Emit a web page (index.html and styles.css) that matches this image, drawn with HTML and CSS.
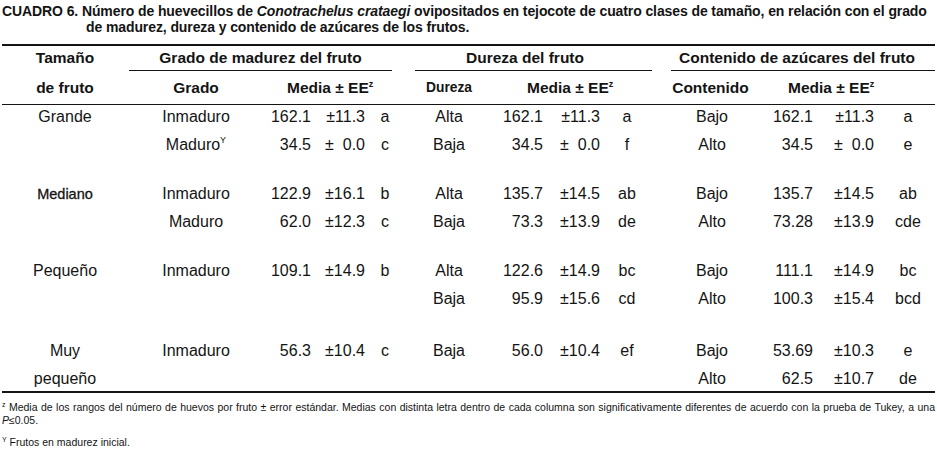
FILE: index.html
```html
<!DOCTYPE html>
<html lang="es">
<head>
<meta charset="utf-8">
<title>Cuadro 6</title>
<link rel="stylesheet" href="styles.css">
</head>
<body>
<div class="page">
  <p class="title">CUADRO 6. Número de huevecillos de <i>Conotrachelus crataegi</i> ovipositados en tejocote de cuatro clases de tamaño, en relación con el grado de madurez, dureza y contenido de azúcares de los frutos.</p>

  <div class="tbl">
    <div class="hd r1 k1">Tamaño</div>
    <div class="hd r1 grp ga">Grado de madurez del fruto</div>
    <div class="hd r1 grp gb">Dureza del fruto</div>
    <div class="hd r1 grp gc">Contenido de azúcares del fruto</div>

    <div class="hd r2 k1">de fruto</div>
    <div class="hd r2 k2">Grado</div>
    <div class="hd r2 ma">Media ± EE<sup class="sz">z</sup></div>
    <div class="hd r2 k6 small">Dureza</div>
    <div class="hd r2 mb">Media ± EE<sup class="sz">z</sup></div>
    <div class="hd r2 k10 cont">Contenido</div>
    <div class="hd r2 mc">Media ± EE<sup class="sz">z</sup></div>
    <div class="rule"></div>

    <div class="c k1">Grande</div>
    <div class="c k2">Inmaduro</div>
    <div class="c n k3">162.1</div>
    <div class="c n k4">±11.3</div>
    <div class="c l k5">a</div>
    <div class="c k6">Alta</div>
    <div class="c n k7">162.1</div>
    <div class="c n k8">±11.3</div>
    <div class="c l k9">a</div>
    <div class="c k10">Bajo</div>
    <div class="c n k11">162.1</div>
    <div class="c n k12">±11.3</div>
    <div class="c l k13">a</div>

    <div class="c k2">Maduro<sup class="sy">Y</sup></div>
    <div class="c n k3">34.5</div>
    <div class="c n k4">±&#8199;0.0</div>
    <div class="c l k5">c</div>
    <div class="c k6">Baja</div>
    <div class="c n k7">34.5</div>
    <div class="c n k8">±&#8199;0.0</div>
    <div class="c l k9">f</div>
    <div class="c k10">Alto</div>
    <div class="c n k11">34.5</div>
    <div class="c n k12">±&#8199;0.0</div>
    <div class="c l k13">e</div>

    <div class="gap g21"></div>

    <div class="c k1 med">Mediano</div>
    <div class="c k2">Inmaduro</div>
    <div class="c n k3">122.9</div>
    <div class="c n k4">±16.1</div>
    <div class="c l k5">b</div>
    <div class="c k6">Alta</div>
    <div class="c n k7">135.7</div>
    <div class="c n k8">±14.5</div>
    <div class="c l k9">ab</div>
    <div class="c k10">Bajo</div>
    <div class="c n k11">135.7</div>
    <div class="c n k12">±14.5</div>
    <div class="c l k13">ab</div>

    <div class="c k2">Maduro</div>
    <div class="c n k3">62.0</div>
    <div class="c n k4">±12.3</div>
    <div class="c l k5">c</div>
    <div class="c k6">Baja</div>
    <div class="c n k7">73.3</div>
    <div class="c n k8">±13.9</div>
    <div class="c l k9">de</div>
    <div class="c k10">Alto</div>
    <div class="c n k11">73.28</div>
    <div class="c n k12">±13.9</div>
    <div class="c l k13">cde</div>

    <div class="gap g21"></div>

    <div class="c k1">Pequeño</div>
    <div class="c k2">Inmaduro</div>
    <div class="c n k3">109.1</div>
    <div class="c n k4">±14.9</div>
    <div class="c l k5">b</div>
    <div class="c k6">Alta</div>
    <div class="c n k7">122.6</div>
    <div class="c n k8">±14.9</div>
    <div class="c l k9">bc</div>
    <div class="c k10">Bajo</div>
    <div class="c n k11">111.1</div>
    <div class="c n k12">±14.9</div>
    <div class="c l k13">bc</div>

    <div class="c k6">Baja</div>
    <div class="c n k7">95.9</div>
    <div class="c n k8">±15.6</div>
    <div class="c l k9">cd</div>
    <div class="c k10">Alto</div>
    <div class="c n k11">100.3</div>
    <div class="c n k12">±15.4</div>
    <div class="c l k13">bcd</div>

    <div class="gap g24"></div>

    <div class="c k1">Muy</div>
    <div class="c k2">Inmaduro</div>
    <div class="c n k3">56.3</div>
    <div class="c n k4">±10.4</div>
    <div class="c l k5">c</div>
    <div class="c k6">Baja</div>
    <div class="c n k7">56.0</div>
    <div class="c n k8">±10.4</div>
    <div class="c l k9">ef</div>
    <div class="c k10">Bajo</div>
    <div class="c n k11">53.69</div>
    <div class="c n k12">±10.3</div>
    <div class="c l k13">e</div>

    <div class="c last k1">pequeño</div>
    <div class="c last k10">Alto</div>
    <div class="c last n k11">62.5</div>
    <div class="c last n k12">±10.7</div>
    <div class="c last l k13">de</div>
  </div>

  <p class="note note1"><sup class="fz">z</sup> Media de los rangos del número de huevos por fruto ± error estándar. Medias con distinta letra dentro de cada columna son significativamente diferentes de acuerdo con la prueba de Tukey, a una <i>P</i>≤0.05.</p>
  <p class="note note2"><sup class="fz">Y</sup> Frutos en madurez inicial.</p>
</div>
</body>
</html>
```

FILE: styles.css
```css
html, body {
  margin: 0;
  padding: 0;
  background: #ffffff;
}

body {
  width: 937px;
  height: 451px;
  overflow: hidden;
  font-family: "Liberation Sans", Arial, sans-serif;
  color: #141414;
}

.page {
  padding: 3px 2px 0 2px;
}

.title {
  margin: 0 0 9px 0;
  font-size: 14px;
  line-height: 16px;
  font-weight: bold;
  letter-spacing: -0.1px;
  padding-left: 84px;
  text-indent: -84px;
}

.tbl {
  display: grid;
  grid-template-columns: 126px 136px 47px 54px 40px 88px 50px 57px 54px 116px 43px 61px 61px;
  border-top: 2px solid #141414;
  border-bottom: 2px solid #141414;
}

.k1 { grid-column: 1; }
.k2 { grid-column: 2; }
.k3 { grid-column: 3; }
.k4 { grid-column: 4; }
.k5 { grid-column: 5; }
.k6 { grid-column: 6; }
.k7 { grid-column: 7; }
.k8 { grid-column: 8; }
.k9 { grid-column: 9; }
.k10 { grid-column: 10; }
.k11 { grid-column: 11; }
.k12 { grid-column: 12; }
.k13 { grid-column: 13; }

.hd {
  font-weight: bold;
  font-size: 15.5px;
  text-align: center;
  white-space: nowrap;
}

.r1 {
  height: 24px;
  line-height: 24px;
}

.r1.k1 {
  height: 25px;
}

.grp {
  border-bottom: 1px solid #141414;
}

.ga {
  grid-column: 2 / 6;
  margin: 0 13px 0 1px;
}

.gb {
  grid-column: 6 / 10;
  margin: 0 2px 0 10px;
  padding-right: 17px;
}

.gc {
  grid-column: 10 / 14;
  margin-left: 17px;
  padding-right: 12px;
}

.r2 {
  height: 33px;
  line-height: 33px;
}

.small {
  font-size: 13.8px;
}

.cont {
  padding-right: 3px;
}

.ma {
  grid-column: 3 / 6;
  text-align: left;
  padding-left: 23px;
}

.mb {
  grid-column: 7 / 10;
  text-align: left;
  padding-left: 34px;
}

.mc {
  grid-column: 11 / 14;
  text-align: left;
  padding-left: 18px;
}

.sz {
  font-size: 9px;
  line-height: 0;
  vertical-align: 6px;
}

.rule {
  grid-column: 1 / -1;
  height: 1px;
  background: #141414;
}

.c {
  font-size: 16px;
  height: 24px;
  line-height: 24px;
  padding-bottom: 4px;
  text-align: center;
  white-space: nowrap;
}

.c.last {
  padding-bottom: 0;
}

.n {
  text-align: right;
}

.l {
  display: flex;
  justify-content: center;
}

.k13.l {
  padding-left: 7px;
}

.med {
  font-size: 14.5px;
  -webkit-text-stroke: 0.3px #141414;
}

.sy {
  font-size: 9px;
  line-height: 0;
  vertical-align: 7px;
}

.gap {
  grid-column: 1 / -1;
}

.g21 { height: 21px; }
.g24 { height: 24px; }

.note {
  margin: 0;
  font-size: 10.5px;
  line-height: 13px;
  text-align: justify;
}

.note1 {
  margin-top: 8px;
}

.note2 {
  margin-top: 9px;
}

.fz {
  font-size: 7px;
  line-height: 0;
  vertical-align: 4px;
}
```
